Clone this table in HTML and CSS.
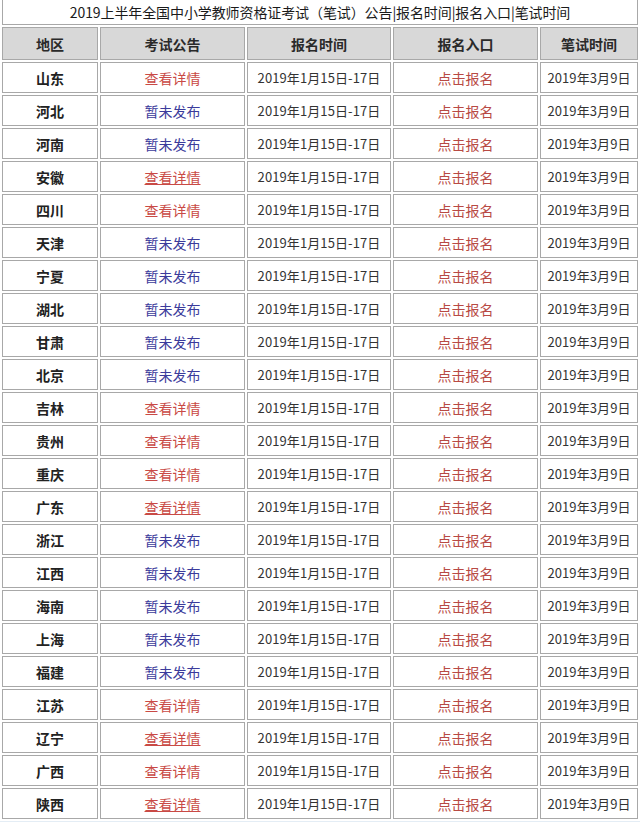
FILE: index.html
```html
<!DOCTYPE html>
<html lang="zh-CN">
<head>
<meta charset="utf-8">
<title>2019上半年全国中小学教师资格证考试（笔试）公告</title>
<link rel="stylesheet" href="styles.css">
</head>
<body>
<table class="exam">
  <colgroup>
    <col class="c1"><col class="c2"><col class="c3"><col class="c4"><col class="c5">
  </colgroup>
  <tr class="title-row"><td colspan="5" class="title">2019上半年全国中小学教师资格证考试（笔试）公告|报名时间|报名入口|笔试时间</td></tr>
  <tr class="head"><th>地区</th><th>考试公告</th><th>报名时间</th><th>报名入口</th><th>笔试时间</th></tr>
  <tr><td class="region">山东</td><td><a class="notice">查看详情</a></td><td class="date">2019年1月15日-17日</td><td><a class="signup">点击报名</a></td><td class="date">2019年3月9日</td></tr>
  <tr><td class="region">河北</td><td><span class="pending">暂未发布</span></td><td class="date">2019年1月15日-17日</td><td><a class="signup">点击报名</a></td><td class="date">2019年3月9日</td></tr>
  <tr><td class="region">河南</td><td><span class="pending">暂未发布</span></td><td class="date">2019年1月15日-17日</td><td><a class="signup">点击报名</a></td><td class="date">2019年3月9日</td></tr>
  <tr><td class="region">安徽</td><td><a class="notice under">查看详情</a></td><td class="date">2019年1月15日-17日</td><td><a class="signup">点击报名</a></td><td class="date">2019年3月9日</td></tr>
  <tr><td class="region">四川</td><td><a class="notice">查看详情</a></td><td class="date">2019年1月15日-17日</td><td><a class="signup">点击报名</a></td><td class="date">2019年3月9日</td></tr>
  <tr><td class="region">天津</td><td><span class="pending">暂未发布</span></td><td class="date">2019年1月15日-17日</td><td><a class="signup">点击报名</a></td><td class="date">2019年3月9日</td></tr>
  <tr><td class="region">宁夏</td><td><span class="pending">暂未发布</span></td><td class="date">2019年1月15日-17日</td><td><a class="signup">点击报名</a></td><td class="date">2019年3月9日</td></tr>
  <tr><td class="region">湖北</td><td><span class="pending">暂未发布</span></td><td class="date">2019年1月15日-17日</td><td><a class="signup">点击报名</a></td><td class="date">2019年3月9日</td></tr>
  <tr><td class="region">甘肃</td><td><span class="pending">暂未发布</span></td><td class="date">2019年1月15日-17日</td><td><a class="signup">点击报名</a></td><td class="date">2019年3月9日</td></tr>
  <tr><td class="region">北京</td><td><span class="pending">暂未发布</span></td><td class="date">2019年1月15日-17日</td><td><a class="signup">点击报名</a></td><td class="date">2019年3月9日</td></tr>
  <tr><td class="region">吉林</td><td><a class="notice">查看详情</a></td><td class="date">2019年1月15日-17日</td><td><a class="signup">点击报名</a></td><td class="date">2019年3月9日</td></tr>
  <tr><td class="region">贵州</td><td><a class="notice">查看详情</a></td><td class="date">2019年1月15日-17日</td><td><a class="signup">点击报名</a></td><td class="date">2019年3月9日</td></tr>
  <tr><td class="region">重庆</td><td><a class="notice">查看详情</a></td><td class="date">2019年1月15日-17日</td><td><a class="signup">点击报名</a></td><td class="date">2019年3月9日</td></tr>
  <tr><td class="region">广东</td><td><a class="notice under">查看详情</a></td><td class="date">2019年1月15日-17日</td><td><a class="signup">点击报名</a></td><td class="date">2019年3月9日</td></tr>
  <tr><td class="region">浙江</td><td><span class="pending">暂未发布</span></td><td class="date">2019年1月15日-17日</td><td><a class="signup">点击报名</a></td><td class="date">2019年3月9日</td></tr>
  <tr><td class="region">江西</td><td><span class="pending">暂未发布</span></td><td class="date">2019年1月15日-17日</td><td><a class="signup">点击报名</a></td><td class="date">2019年3月9日</td></tr>
  <tr><td class="region">海南</td><td><span class="pending">暂未发布</span></td><td class="date">2019年1月15日-17日</td><td><a class="signup">点击报名</a></td><td class="date">2019年3月9日</td></tr>
  <tr><td class="region">上海</td><td><span class="pending">暂未发布</span></td><td class="date">2019年1月15日-17日</td><td><a class="signup">点击报名</a></td><td class="date">2019年3月9日</td></tr>
  <tr><td class="region">福建</td><td><span class="pending">暂未发布</span></td><td class="date">2019年1月15日-17日</td><td><a class="signup">点击报名</a></td><td class="date">2019年3月9日</td></tr>
  <tr><td class="region">江苏</td><td><a class="notice">查看详情</a></td><td class="date">2019年1月15日-17日</td><td><a class="signup">点击报名</a></td><td class="date">2019年3月9日</td></tr>
  <tr><td class="region">辽宁</td><td><a class="notice under">查看详情</a></td><td class="date">2019年1月15日-17日</td><td><a class="signup">点击报名</a></td><td class="date">2019年3月9日</td></tr>
  <tr><td class="region">广西</td><td><a class="notice">查看详情</a></td><td class="date">2019年1月15日-17日</td><td><a class="signup">点击报名</a></td><td class="date">2019年3月9日</td></tr>
  <tr><td class="region">陕西</td><td><a class="notice under">查看详情</a></td><td class="date">2019年1月15日-17日</td><td><a class="signup">点击报名</a></td><td class="date">2019年3月9日</td></tr>
</table>
<div class="footer-band"></div>
</body>
</html>
```

FILE: styles.css
```css
html, body {
  margin: 0;
  padding: 0;
  background: #ffffff;
}

body {
  font-family: "Noto Sans CJK SC", "Noto Sans", sans-serif;
  font-size: 14px;
  color: #333333;
  overflow: hidden;
}

.exam {
  width: 640px;
  margin-top: -3px;
  table-layout: fixed;
  border-collapse: separate;
  border-spacing: 2px;
}

.c1 { width: 96px; }
.c2 { width: 145px; }
.c3 { width: 144px; }
.c4 { width: 145px; }
.c5 { width: 98px; }

.exam td,
.exam th {
  box-sizing: border-box;
  border: 1px solid #a8a8a8;
  padding: 0;
  text-align: center;
  vertical-align: middle;
  white-space: nowrap;
  height: 31px;
  line-height: 20px;
}

.exam .title {
  height: 26px;
  border-top-color: #ffffff;
  color: #1a1a1a;
  font-size: 14px;
  letter-spacing: -0.1px;
}

.head th {
  height: 33px;
  background: #d8d8d8;
  color: #2a2a2a;
  font-weight: bold;
  font-size: 14px;
}

.region {
  font-weight: bold;
  color: #222222;
}

.notice {
  color: #c94a45;
  text-decoration: none;
}

.notice.under {
  text-decoration: underline;
}

.pending {
  color: #3b3b9b;
}

.signup {
  color: #b84a44;
  text-decoration: none;
}

.date {
  color: #333333;
  font-size: 13px;
  letter-spacing: 0.1px;
}

.footer-band {
  height: 20px;
  background: linear-gradient(#e4edf5, #eef3f8);
}
```
